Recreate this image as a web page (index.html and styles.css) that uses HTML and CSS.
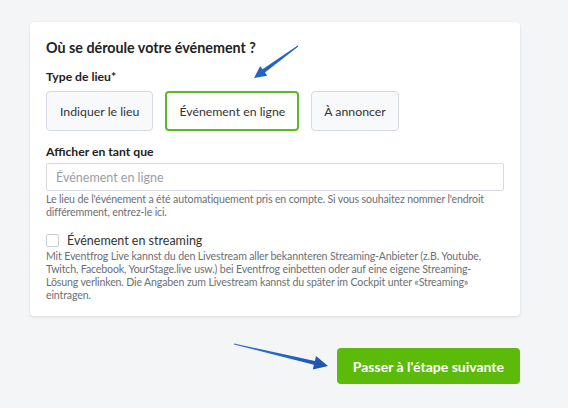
FILE: index.html
```html
<!DOCTYPE html>
<html>
<head>
    <title>Où se déroule votre événement ?</title>
    <meta charset="UTF-8">
    <meta name="viewport" content="width=device-width, initial-scale=1.0">
    <link rel="stylesheet" href="styles.css">
</head>
<body>
    <div class="page">
        <div class="card">
            <h2>Où se déroule votre événement ?</h2>

            <div class="field-label">Type de lieu*</div>
            <div class="choices">
                <button class="choice">Indiquer le lieu</button>
                <button class="choice selected">Événement en ligne</button>
                <button class="choice">À annoncer</button>
            </div>

            <label class="field-label second" for="display_as">Afficher en tant que</label>
            <input type="text" id="display_as" placeholder="Événement en ligne">
            <p class="help">Le lieu de l'événement a été automatiquement pris en compte. Si vous souhaitez nommer l'endroit différemment, entrez-le ici.</p>

            <label class="check-row">
                <input type="checkbox" class="check">
                <span>Événement en streaming</span>
            </label>
            <p class="help small">Mit Eventfrog Live kannst du den Livestream aller bekannteren Streaming-Anbieter (z.B. Youtube, Twitch, Facebook, YourStage.live usw.) bei Eventfrog einbetten oder auf eine eigene Streaming-Lösung verlinken. Die Angaben zum Livestream kannst du später im Cockpit unter «Streaming» eintragen.</p>
        </div>

        <div class="actions">
            <button class="next">Passer à l'étape suivante</button>
        </div>
    </div>

    <!-- annotation arrows -->
    <svg class="arrows" width="568" height="408" viewBox="0 0 568 408">
        <defs>
            <linearGradient id="blue" x1="0" y1="0" x2="1" y2="1">
                <stop offset="0" stop-color="#2f74d6"/>
                <stop offset="1" stop-color="#1b52ad"/>
            </linearGradient>
        </defs>
        <polygon fill="url(#blue)" points="297.7,45.6 262.5,69.3 260.2,66.0 254,78 267.2,75.8 264.9,72.5 298.3,46.4"/>
        <polygon fill="url(#blue)" points="234.1,343.5 314.9,360.9 316.0,356.0 328,366 312.8,369.6 313.9,364.7 233.9,344.5"/>
    </svg>
</body>
</html>
```

FILE: styles.css
```css
body {
    margin: 0;
    background-color: #f4f5f7;
    font-family: Lato, "Liberation Sans", sans-serif;
    color: #222;
    width: 568px;
    height: 408px;
    overflow: hidden;
    position: relative;
}
.page {
    width: 490px;
    margin-left: 30px;
    padding-top: 22px;
}
.card {
    background-color: #fff;
    border-radius: 4px;
    box-shadow: 0 1px 3px rgba(0, 0, 0, 0.12);
    padding: 16px 16px 14px 16px;
}
h2 {
    margin: 0;
    font-size: 14.3px;
    line-height: 20px;
    font-weight: 700;
    color: #222;
}
.field-label {
    display: block;
    margin-top: 10px;
    margin-bottom: 5px;
    font-size: 12.2px;
    line-height: 18px;
    font-weight: 700;
}
.field-label.second {
    margin-top: 12px;
    margin-bottom: 2px;
}
.choices {
    display: flex;
    gap: 12px;
}
.choice {
    height: 40px;
    padding: 0 13px;
    font-family: inherit;
    font-size: 12.3px;
    color: #333;
    background-color: #f8f9fb;
    border: 1px solid #d5dae1;
    border-radius: 4px;
    cursor: pointer;
}
.choice.selected {
    background-color: #fff;
    border: 2px solid #5cb82a;
    padding: 0 12px;
}
.choice.selected + .choice {
    padding: 0 12px;
}
input[type="text"] {
    display: block;
    width: 458px;
    height: 28px;
    box-sizing: border-box;
    padding: 0 9px;
    font-family: inherit;
    font-size: 12.5px;
    border: 1px solid #d8dce2;
    border-radius: 2px;
}
input[type="text"]::placeholder {
    color: #9a9ea4;
}
.help {
    margin: 2px 0 0 0;
    font-size: 10.6px;
    letter-spacing: -0.15px;
    line-height: 13px;
    color: #6b6f75;
}
.check-row {
    display: flex;
    align-items: center;
    margin-top: 12px;
    height: 18px;
    font-size: 12.5px;
    color: #333;
}
.check {
    appearance: none;
    width: 13px;
    height: 13px;
    margin: 0 8px 0 0;
    border: 1px solid #c9ced6;
    border-radius: 2px;
    background-color: #fff;
}
.help.small {
    margin-top: 1px;
    padding-right: 12px;
}
.actions {
    display: flex;
    justify-content: flex-end;
    margin-top: 32px;
}
.next {
    height: 36px;
    padding: 0 16px;
    font-family: inherit;
    font-size: 14px;
    font-weight: 700;
    color: #fff;
    background-color: #5cba0b;
    border: none;
    border-radius: 4px;
    cursor: pointer;
}
.arrows {
    position: absolute;
    top: 0;
    left: 0;
    pointer-events: none;
}
```
